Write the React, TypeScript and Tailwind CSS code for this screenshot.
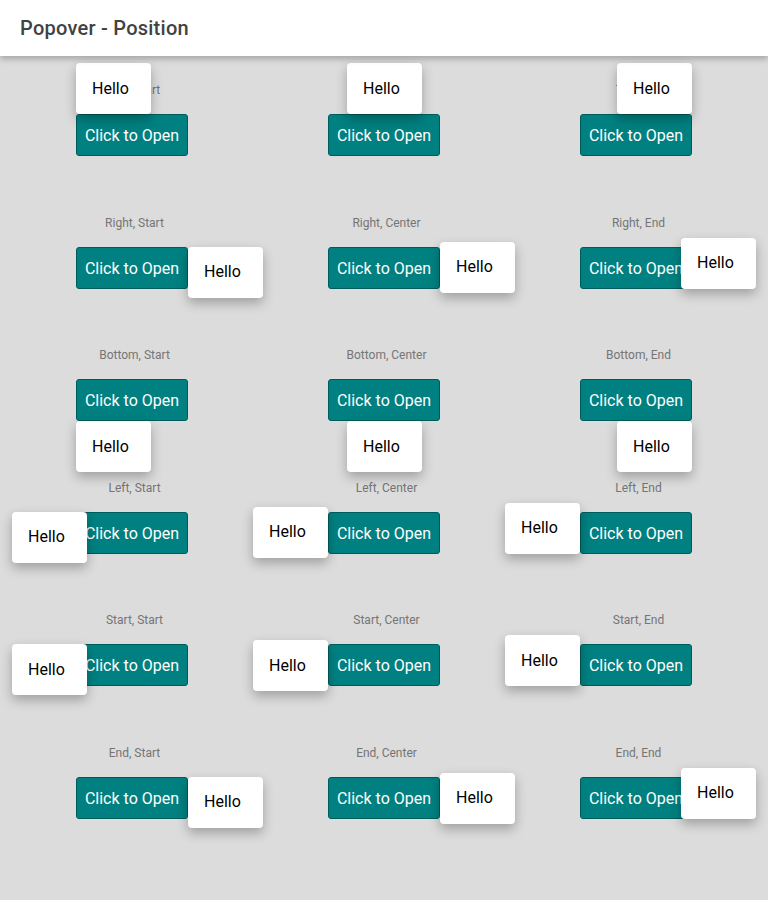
import React from 'react';

type Cell = {
    label: string;
    pop: string; // tailwind offset classes for the popover, relative to the button
};

const rows: Cell[][] = [
    [
        { label: 'Top, Start', pop: 'left-0 top-[-51px]' },
        { label: 'Top, Center', pop: 'left-[19px] top-[-51px]' },
        { label: 'Top, End', pop: 'left-[37px] top-[-51px]' },
    ],
    [
        { label: 'Right, Start', pop: 'left-[112px] top-0' },
        { label: 'Right, Center', pop: 'left-[112px] top-[-5px]' },
        { label: 'Right, End', pop: 'left-[101px] top-[-9px]' },
    ],
    [
        { label: 'Bottom, Start', pop: 'left-0 top-[42px]' },
        { label: 'Bottom, Center', pop: 'left-[19px] top-[42px]' },
        { label: 'Bottom, End', pop: 'left-[37px] top-[42px]' },
    ],
    [
        { label: 'Left, Start', pop: 'left-[-64px] top-0' },
        { label: 'Left, Center', pop: 'left-[-75px] top-[-5px]' },
        { label: 'Left, End', pop: 'left-[-75px] top-[-9px]' },
    ],
    [
        { label: 'Start, Start', pop: 'left-[-64px] top-0' },
        { label: 'Start, Center', pop: 'left-[-75px] top-[-4px]' },
        { label: 'Start, End', pop: 'left-[-75px] top-[-9px]' },
    ],
    [
        { label: 'End, Start', pop: 'left-[112px] top-0' },
        { label: 'End, Center', pop: 'left-[112px] top-[-4px]' },
        { label: 'End, End', pop: 'left-[101px] top-[-9px]' },
    ],
];

function PopoverCell({ cell }: { cell: Cell }) {
    return (
        <div className="h-[132.5px] pt-[26px] flex flex-col items-center">
            <div className="pl-[5px] text-[12px] leading-[16px] text-[#757575]">{cell.label}</div>
            <div className="relative mt-[16px]">
                <button className="w-[112px] h-[42px] pt-[2px] rounded-[3px] bg-[#008080] border border-[#005c5c] text-white text-[16px] flex items-center justify-center">
                    Click to Open
                </button>
                {/* Popover */}
                <div
                    className={`absolute ${cell.pop} z-10 w-[75px] h-[51px] pl-4 flex items-center rounded-[4px] bg-white text-black text-[16px] shadow-[0_5px_12px_rgba(0,0,0,0.28)]`}
                >
                    Hello
                </div>
            </div>
        </div>
    );
}

export default function App() {
    return (
        <div className="min-h-[900px] bg-[#dcdcdc] font-['Roboto',sans-serif]">
            {/* Header */}
            <div className="relative z-20 h-14 bg-white flex items-center px-5 shadow-[0_3px_6px_rgba(0,0,0,0.25)]">
                <h1 className="text-[20px] font-medium tracking-[0.25px] text-[#424242]">Popover - Position</h1>
            </div>

            <div className="px-[6px]">
                {rows.map((row, i) => (
                    <div key={i} className="grid grid-cols-3">
                        {row.map((cell) => (
                            <PopoverCell key={cell.label} cell={cell} />
                        ))}
                    </div>
                ))}
            </div>
        </div>
    );
}
